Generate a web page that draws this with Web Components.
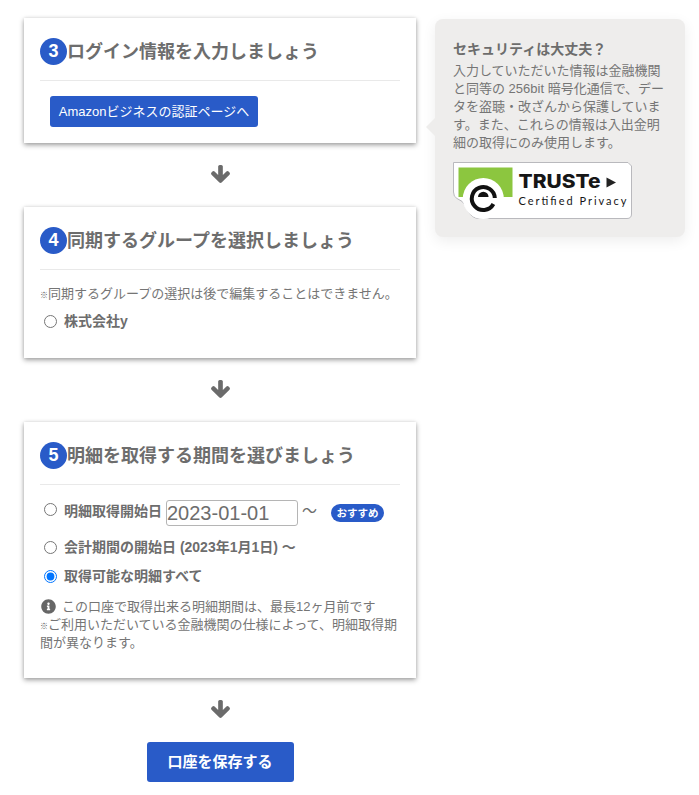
<!DOCTYPE html>
<html lang="ja">
<head>
<meta charset="utf-8">
<title>口座登録</title>
<style>
  html, body { margin: 0; background: #fff; }
  body {
    font-family: "Liberation Sans", "Noto Sans CJK JP", sans-serif;
    font-size: 13px;
    color: #707070;
  }
</style>
</head>
<body>
<bank-form-page>
  <step-card num="3" title-text="ログイン情報を入力しましょう">
    <blue-button small>Amazonビジネスの認証ページへ</blue-button>
  </step-card>
  <down-arrow></down-arrow>
  <step-card num="4" title-text="同期するグループを選択しましょう" body-gap="15">
    <small-note><tiny-mark>※</tiny-mark>同期するグループの選択は後で編集することはできません。</small-note>
    <radio-row style="margin-top:9px;margin-bottom:12px"><b>株式会社y</b></radio-row>
  </step-card>
  <down-arrow></down-arrow>
  <step-card num="5" title-text="明細を取得する期間を選びましょう" body-gap="15">
    <radio-row raised>
      <b style="margin-bottom:4px">明細取得開始日</b>
      <date-box>2023-01-01</date-box>
      <span style="font-size:15px;margin-left:4px;width:29px;margin-bottom:4px">〜</span>
      <blue-tag>おすすめ</blue-tag>
    </radio-row>
    <radio-row style="margin-top:12px"><b>会計期間の開始日 (2023年1月1日) 〜</b></radio-row>
    <radio-row style="margin-top:11px" checked><b>取得可能な明細すべて</b></radio-row>
    <small-note style="margin-top:13px;margin-bottom:10px">
      <info-icon></info-icon>この口座で取得出来る明細期間は、最長12ヶ月前です<br>
      <tiny-mark>※</tiny-mark>ご利用いただいている金融機関の仕様によって、明細取得期間が異なります。
    </small-note>
  </step-card>
  <down-arrow></down-arrow>
  <blue-button>口座を保存する</blue-button>

  <security-note slot="side">
    <truste-badge></truste-badge>
  </security-note>
</bank-form-page>

<script>
(function () {
  // small helper, every element is just a template + open shadow root
  function define(name, html) {
    const template = document.createElement("template");
    template.innerHTML = html;
    customElements.define(name, class extends HTMLElement {
      constructor() {
        super();
        this.attachShadow({ mode: "open" });
        this.shadowRoot.appendChild(template.content.cloneNode(true));
      }
    });
  }

  define("bank-form-page", `
    <style>
      :host { display: flex; align-items: flex-start; padding: 18px 0 13px 24px; gap: 19px; }
      .main { width: 392px; display: flex; flex-direction: column; align-items: stretch; }
      .side { width: 250px; margin-top: 1px; }
    </style>
    <div class="main"><slot></slot></div>
    <div class="side"><slot name="side"></slot></div>
  `);

  class StepCard extends HTMLElement {
    constructor() {
      super();
      this.attachShadow({ mode: "open" });
      this.shadowRoot.innerHTML = `
        <style>
          :host { display: block; background: #fff; padding: 20px 16px 16px; box-shadow: 0 2px 5px rgba(0,0,0,.38), 0 0 3px rgba(0,0,0,.08); }
          .head { display: flex; align-items: center; height: 27px; padding-bottom: 15px; border-bottom: 1px solid #e9e9e9; }
          .num { width: 27px; height: 27px; border-radius: 50%; background: #295bc8; color: #fff; font-size: 18px; font-weight: bold; line-height: 27px; text-align: center; flex: none; }
          h2 { margin: 1px 0 0; font-size: 18px; font-weight: bold; color: #6d6d6d; line-height: 27px; }
          .body { padding-top: 15px; }
          ::slotted(blue-button) { margin-left: 10px; }
        </style>
        <div class="head"><div class="num"></div><h2></h2></div>
        <div class="body"><slot></slot></div>`;
    }
    connectedCallback() {
      this.shadowRoot.querySelector(".num").textContent = this.getAttribute("num");
      this.shadowRoot.querySelector("h2").textContent = this.getAttribute("title-text");
      const gap = this.getAttribute("body-gap");
      if (gap) this.shadowRoot.querySelector(".body").style.paddingTop = gap + "px";
    }
  }
  customElements.define("step-card", StepCard);

  define("down-arrow", `
    <style>
      :host { display: flex; justify-content: center; align-items: center; height: 61px; padding-bottom: 3px; }
      svg { width: 19px; height: 18px; fill: #6b6b6b; display: block; }
    </style>
    <svg viewBox="117 128 1558 1483"><path d="M1675 832q0 53-37 90l-651 652q-39 37-91 37-53 0-90-37l-651-652q-38-36-38-90 0-53 38-91l74-75q39-37 91-37 53 0 90 37l294 294v-704q0-52 38-90t90-38h128q52 0 90 38t38 90v704l294-294q37-37 90-37 52 0 91 37l75 75q37 39 37 91z"/></svg>
  `);

  define("blue-button", `
    <style>
      :host { display: block; width: 147px; height: 40px; margin: 0 auto; background: #295bc8; color: #fff; border-radius: 3px; font-size: 15px; font-weight: bold; line-height: 40px; text-align: center; }
      :host([small]) { width: 208px; height: 31px; margin: 0; font-size: 13px; font-weight: normal; line-height: 31px; }
    </style>
    <slot></slot>
  `);

  define("small-note", `
    <style>
      :host { display: block; font-size: 13px; line-height: 18px; color: #757575; }
    </style>
    <slot></slot>
  `);

  define("tiny-mark", `
    <style>
      :host { display: inline-block; font-size: 8px; font-weight: bold; line-height: 8px; color: #555; }
    </style>
    <slot></slot>
  `);

  class RadioRow extends HTMLElement {
    constructor() {
      super();
      this.attachShadow({ mode: "open" });
      this.shadowRoot.innerHTML = `
        <style>
          :host { display: flex; align-items: center; min-height: 18px; line-height: 18px; padding-left: 4px; font-size: 14px; color: #6d6d6d; }
          :host([raised]) input { margin-bottom: 7px; }
          input { width: 13px; height: 13px; margin: 0 7px 0 0; flex: none; }
          .rest { display: flex; align-items: center; }
        </style>
        <input type="radio" name="r">
        <div class="rest"><slot></slot></div>`;
    }
    connectedCallback() {
      this.shadowRoot.querySelector("input").checked = this.hasAttribute("checked");
    }
  }
  customElements.define("radio-row", RadioRow);

  define("date-box", `
    <style>
      :host { display: block; box-sizing: border-box; width: 132px; height: 26px; margin-left: 4px; border: 1px solid #b5b5b5; border-radius: 3px; font-size: 20px; line-height: 25px; color: #6d6d6d; font-family: "Liberation Sans", sans-serif; }
    </style>
    <slot></slot>
  `);

  define("blue-tag", `
    <style>
      :host { display: block; width: 53px; height: 18px; border-radius: 9px; background: #295bc8; color: #fff; font-size: 10.5px; font-weight: bold; line-height: 18px; text-align: center; }
    </style>
    <slot></slot>
  `);

  define("info-icon", `
    <style>
      :host { display: inline-block; vertical-align: -3px; margin: 0 6px 0 1px; line-height: 0; }
      svg { width: 15px; height: 15px; fill: #666; display: block; }
    </style>
    <svg viewBox="0 0 512 512"><path d="M256 8C119 8 8 119.08 8 256c0 137 111 248 248 248s248-111 248-248C504 119.08 393 8 256 8zm0 110c23.2 0 42 18.8 42 42s-18.8 42-42 42-42-18.8-42-42 18.8-42 42-42zm56 254c0 6.6-5.4 12-12 12h-88c-6.6 0-12-5.4-12-12v-24c0-6.6 5.4-12 12-12h12v-64h-12c-6.6 0-12-5.4-12-12v-24c0-6.6 5.4-12 12-12h64c6.6 0 12 5.4 12 12v100h12c6.6 0 12 5.4 12 12v24z"/></svg>
  `);

  define("security-note", `
    <style>
      :host { display: block; position: relative; box-sizing: border-box; height: 218px; padding: 21px 18px 0; background: #eeedec; border-radius: 8px; box-shadow: 0 4px 14px rgba(0,0,0,.07); font-size: 13px; color: #757575; }
      :host::before { content: ""; position: absolute; left: -9px; top: 99px; border: 9px solid transparent; border-left: 0; border-right-color: #eeedec; }
      h3 { margin: 0; font-size: 14px; line-height: 18px; color: #6d6d6d; font-weight: bold; }
      p { margin: 4px 0 10px; line-height: 18px; width: 218px; }
    </style>
    <h3>セキュリティは大丈夫？</h3>
    <p>入力していただいた情報は金融機関<br>と同等の 256bit 暗号化通信で、デー<br>タを盗聴・改ざんから保護していま<br>す。また、これらの情報は入出金明<br>細の取得にのみ使用します。</p>
    <slot></slot>
  `);

  define("truste-badge", `
    <style>
      :host { display: block; width: 179px; height: 57px; }
      svg { display: block; }
      text { fill: #161616; }
    </style>
    <svg width="179" height="57" viewBox="0 0 179 57">
      <path d="M.5 .5H175L178.5 4V52Q178.5 56.5 174 56.5H26Q19 56.5 15 49L12 43Q10 39 4 36.5Q.5 35 .5 30Z" fill="#fff" stroke="#b9b9bd"/>
      <path d="M5.5 5.5H59.5V35H5.5Z" fill="#8cc63f"/>
      <circle cx="30.3" cy="36.5" r="20.5" fill="#fff"/>
      <path d="M41.8 36A11.5 11.5 0 1 0 40.4 42" fill="none" stroke="#111" stroke-width="4"/>
      <path d="M25 35a5.3 5.3 0 0 1 10.6 0Z" fill="#111"/>
      <text x="65.5" y="26" font-family="Inter, sans-serif" font-size="19" font-weight="800" textLength="82" lengthAdjust="spacingAndGlyphs">TRUSTe</text>
      <path d="M153.5 15.5L163 20.5L153.5 25.5Z" fill="#222"/>
      <text x="65.5" y="43" font-family="Lato, sans-serif" font-size="11" textLength="108" lengthAdjust="spacing">Certified Privacy</text>
    </svg>
  `);
})();
</script>
</body>
</html>
